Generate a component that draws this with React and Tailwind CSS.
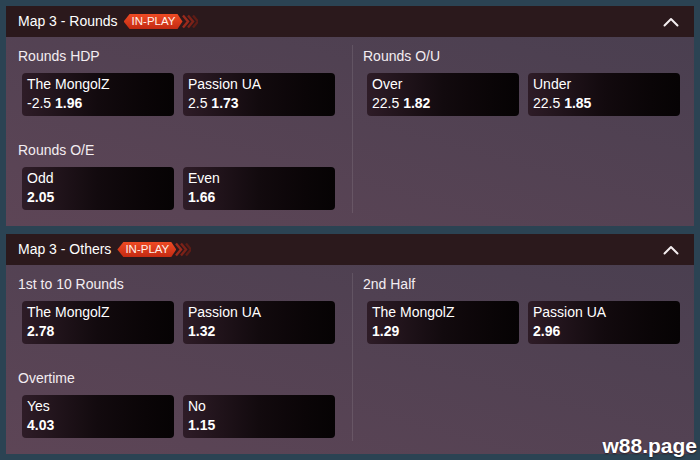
const panels = [
  {
    title: "Map 3 - Rounds",
    left: [
      {
        label: "Rounds HDP",
        picks: [
          { name: "The MongolZ", line: "-2.5", odds: "1.96" },
          { name: "Passion UA", line: "2.5", odds: "1.73" },
        ],
      },
      {
        label: "Rounds O/E",
        picks: [
          { name: "Odd", odds: "2.05" },
          { name: "Even", odds: "1.66" },
        ],
      },
    ],
    right: [
      {
        label: "Rounds O/U",
        picks: [
          { name: "Over", line: "22.5", odds: "1.82" },
          { name: "Under", line: "22.5", odds: "1.85" },
        ],
      },
    ],
  },
  {
    title: "Map 3 - Others",
    left: [
      {
        label: "1st to 10 Rounds",
        picks: [
          { name: "The MongolZ", odds: "2.78" },
          { name: "Passion UA", odds: "1.32" },
        ],
      },
      {
        label: "Overtime",
        picks: [
          { name: "Yes", odds: "4.03" },
          { name: "No", odds: "1.15" },
        ],
      },
    ],
    right: [
      {
        label: "2nd Half",
        picks: [
          { name: "The MongolZ", odds: "1.29" },
          { name: "Passion UA", odds: "2.96" },
        ],
      },
    ],
  },
];

const InPlayBadge = () => (
  <div className="ml-[6px] flex items-center">
    <span className="h-[15px] pl-[8px] pr-[7px] flex items-center text-[11.5px] leading-none text-[#fff1ea] bg-linear-to-b from-[#ee4b24] to-[#c42a12] [clip-path:polygon(0_50%,6px_0,calc(100%_-_5px)_0,100%_50%,calc(100%_-_5px)_100%,6px_100%)]">
      IN-PLAY
    </span>
    <svg width="16" height="15" viewBox="0 0 16 15" className="-ml-[1px]">
      <path d="M1 1.5 L6 7.5 L1 13.5" fill="none" stroke="#9a2a1c" strokeWidth="2.4" />
      <path d="M6 1.5 L11 7.5 L6 13.5" fill="none" stroke="#7c2218" strokeWidth="2.4" />
      <path d="M11 1.5 L16 7.5 L11 13.5" fill="none" stroke="#5e1c16" strokeWidth="2.4" />
    </svg>
  </div>
);

const ChevronUp = () => (
  <svg width="16" height="10" viewBox="0 0 16 10" fill="none">
    <path d="M1.5 8.5 L8 2 L14.5 8.5" stroke="#f4eef0" strokeWidth="2" strokeLinecap="round" strokeLinejoin="round" />
  </svg>
);

const PickCard = ({ pick }) => (
  <div className="h-[43px] rounded-[4px] pl-[5px] pt-[2px] text-[14px] leading-[19px] text-white bg-linear-to-r from-[#2e1c27] via-[#120a0e] to-[#060304] cursor-pointer">
    <div>{pick.name}</div>
    <div>
      {pick.line && <span>{pick.line} </span>}
      <span className="font-bold">{pick.odds}</span>
    </div>
  </div>
);

const Market = ({ market }) => (
  <div>
    <div className="h-[22px] leading-[22px] text-[14px] text-[#f3edf1]">{market.label}</div>
    <div className="mt-[6px] pl-1 grid grid-cols-[152px_152px] gap-[9px]">
      {market.picks.map((pick) => (
        <PickCard key={pick.name} pick={pick} />
      ))}
    </div>
  </div>
);

const Panel = ({ panel }) => (
  <section>
    <div className="h-[31px] flex items-center justify-between pl-3 pr-[15px] bg-[#2b191c]">
      <div className="flex items-center">
        <span className="text-[14px] text-white">{panel.title}</span>
        <InPlayBadge />
      </div>
      <ChevronUp />
    </div>
    <div className="flex px-3 pt-2 pb-4 bg-linear-to-tr from-[#5d4556] to-[#4a3f50]">
      <div className="w-[322px] flex flex-col gap-[23px]">
        {panel.left.map((m) => (
          <Market key={m.label} market={m} />
        ))}
      </div>
      <div className="ml-3 -mb-[3px] w-px bg-white/10" />
      <div className="flex-1 pl-[10px] flex flex-col gap-[23px]">
        {panel.right.map((m) => (
          <Market key={m.label} market={m} />
        ))}
      </div>
    </div>
  </section>
);

export default function App() {
  return (
    <div className="relative w-[700px] h-[460px] overflow-hidden bg-[#2b4353] p-[6px] flex flex-col gap-2 font-['Liberation_Sans',Arial,sans-serif]">
      {panels.map((p) => (
        <Panel key={p.title} panel={p} />
      ))}
      <span className="absolute right-[3px] top-[435px] text-[21px] font-bold leading-none text-white [text-shadow:0_1px_2px_rgba(0,0,0,0.6)]">
        w88.page
      </span>
    </div>
  );
}
